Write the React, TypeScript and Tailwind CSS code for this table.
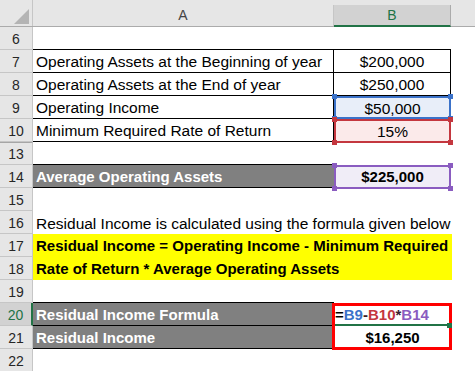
import React from "react";

const FONT = "font-['Liberation_Sans',Arial,sans-serif]";

function RowHead({ n, active = false, extra = "" }: { n: number; active?: boolean; extra?: string }) {
  return (
    <div
      className={`w-[33px] shrink-0 h-full flex items-center justify-center pt-[2px] text-[14px] border-b ${
        active
          ? "bg-[#d2d2d2] text-[#217346] border-r-2 border-r-[#217346] border-b-[#c6c6c6]"
          : "bg-[#e6e6e6] text-[#262626] border-r border-[#c6c6c6]"
      } ${extra}`}
    >
      {n}
    </div>
  );
}

function Row({ n, active, headExtra, children }: { n: number; active?: boolean; headExtra?: string; children?: React.ReactNode }) {
  return (
    <div className="flex h-[23px] shrink-0">
      <RowHead n={n} active={active} extra={headExtra} />
      {children}
    </div>
  );
}

function Corners({ c }: { c: string }) {
  return (
    <>
      <div className={`absolute -left-[4px] -top-[4px] w-[5px] h-[5px] ${c}`} />
      <div className={`absolute -right-[4px] -top-[4px] w-[5px] h-[5px] ${c}`} />
      <div className={`absolute -left-[4px] -bottom-[4px] w-[5px] h-[5px] ${c}`} />
      <div className={`absolute -right-[4px] -bottom-[4px] w-[5px] h-[5px] ${c}`} />
    </>
  );
}

function BlueBox() {
  return (
    <div className="pointer-events-none absolute left-0 top-0 right-0 bottom-0 border-2 border-[#3b72c9] z-10">
      <Corners c="bg-[#3b72c9]" />
    </div>
  );
}
function RedBox() {
  return (
    <div className="pointer-events-none absolute left-0 top-0 right-0 -bottom-px border-2 border-[#c4373f] z-10">
      <Corners c="bg-[#c4373f]" />
    </div>
  );
}
function PurpleBox() {
  return (
    <div className="pointer-events-none absolute left-0 top-0 right-0 -bottom-px border-2 border-[#8a5cc0] z-10">
      <Corners c="bg-[#8a5cc0]" />
    </div>
  );
}

const txt = "flex items-center pt-[2px] text-[15.5px] text-black whitespace-nowrap overflow-visible";

export default function App() {
  return (
    <div className={`w-[475px] h-[371px] overflow-hidden bg-white ${FONT} flex flex-col`}>
      {/* Column header */}
      <div className="flex h-[27px] shrink-0 bg-[#e6e6e6] border-b border-[#ababab]">
        <div className="w-[33px] shrink-0 h-full border-r border-[#c6c6c6] flex items-end justify-end pr-[3px] pb-[2px]">
          <svg width="15" height="15" viewBox="0 0 15 15">
            <polygon points="15,0 15,15 0,15" fill="#b4b4b4" />
          </svg>
        </div>
        <div className="w-[301px] shrink-0 mt-[5px] h-[21px] border-r border-[#c6c6c6] flex items-center justify-center text-[14px] text-[#444]">
          A
        </div>
        <div className="w-[117px] shrink-0 mt-[5px] h-[22px] bg-[#d2d2d2] border-r border-[#ababab] border-b-2 border-b-[#217346] flex items-center justify-center text-[14px] text-[#217346]">
          B
        </div>
        <div className="flex-1" />
      </div>

      <Row n={6}>
        <div className="w-[301px] shrink-0 border-b border-black" />
        <div className="w-[117px] shrink-0 border-b border-black" />
      </Row>
      <Row n={7}>
        <div className={`w-[301px] shrink-0 border-r border-b border-black pl-[3px] ${txt}`}>
          Operating Assets at the Beginning of year
        </div>
        <div className={`w-[117px] shrink-0 border-r border-b border-black justify-center ${txt}`}>$200,000</div>
      </Row>
      <Row n={8}>
        <div className={`w-[301px] shrink-0 border-r border-b border-black pl-[3px] ${txt}`}>
          Operating Assets at the End of year
        </div>
        <div className={`w-[117px] shrink-0 border-r border-b border-black justify-center ${txt}`}>$250,000</div>
      </Row>
      <Row n={9}>
        <div className={`w-[301px] shrink-0 border-r border-b border-black pl-[3px] ${txt}`}>Operating Income</div>
        <div className={`relative w-[117px] shrink-0 bg-[#e8eef9] justify-center ${txt}`}>
          $50,000
          <BlueBox />
        </div>
      </Row>
      <Row n={10}>
        <div className={`w-[301px] shrink-0 border-r border-b border-black pl-[3px] ${txt}`}>
          Minimum Required Rate of Return
        </div>
        <div className={`relative w-[117px] shrink-0 bg-[#fbeaea] justify-center ${txt}`}>
          15%
          <RedBox />
        </div>
      </Row>
      <Row n={13} headExtra="border-t border-t-[#a6a6a6]">
        <div className="w-[301px] shrink-0 border-b border-black" />
      </Row>
      <Row n={14}>
        <div className={`w-[301px] shrink-0 bg-[#808080] border-b border-black pl-[3px] ${txt} !text-white font-bold !text-[15px]`}>
          Average Operating Assets
        </div>
        <div className={`relative w-[117px] shrink-0 bg-[#f0edf7] justify-center ${txt} font-bold !text-[15px]`}>
          $225,000
          <PurpleBox />
        </div>
      </Row>
      <Row n={15} />
      <Row n={16}>
        <div className={`w-[418px] shrink-0 pl-[3px] ${txt}`}>
          Residual Income is calculated using the formula given below
        </div>
      </Row>
      <Row n={17}>
        <div className={`w-[419px] shrink-0 bg-[#ffff00] pl-[3px] ${txt} font-bold !text-[15px]`}>
          Residual Income = Operating Income - Minimum Required
        </div>
      </Row>
      <Row n={18}>
        <div className={`w-[419px] shrink-0 bg-[#ffff00] pl-[3px] ${txt} font-bold !text-[15px]`}>
          Rate of Return * Average Operating Assets
        </div>
      </Row>
      <Row n={19}>
        <div className="w-[301px] shrink-0 border-b border-black" />
      </Row>
      <Row n={20} active>
        <div className={`w-[301px] shrink-0 bg-[#808080] border-b border-black pl-[3px] ${txt} !text-white font-bold !text-[15px]`}>
          Residual Income Formula
        </div>
        <div className={`relative w-[117px] shrink-0 pl-[1px] ${txt} font-bold !text-[15px]`}>
          <span className="text-black">=</span>
          <span className="text-[#3b72c9]">B9</span>
          <span className="text-[#3a2020]">-</span>
          <span className="text-[#c4373f]">B10</span>
          <span className="text-[#3a2030]">*</span>
          <span className="text-[#8a5cc0]">B14</span>
          <div className="absolute left-[1px] right-[4px] bottom-0 h-[2px] bg-[#217346]" />
          <div className="absolute -right-[1px] -bottom-[2px] w-[5px] h-[5px] bg-[#217346] z-30" />
          <div className="pointer-events-none absolute -left-[2px] top-0 w-[120px] h-[47px] border-[3px] border-[#ff0000] z-20" />
        </div>
      </Row>
      <Row n={21}>
        <div className={`w-[301px] shrink-0 bg-[#808080] border-b border-black pl-[3px] ${txt} !text-white font-bold !text-[15px]`}>
          Residual Income
        </div>
        <div className={`w-[117px] shrink-0 justify-center ${txt} font-bold !text-[15px]`}>$16,250</div>
      </Row>
      <Row n={22} />
    </div>
  );
}
